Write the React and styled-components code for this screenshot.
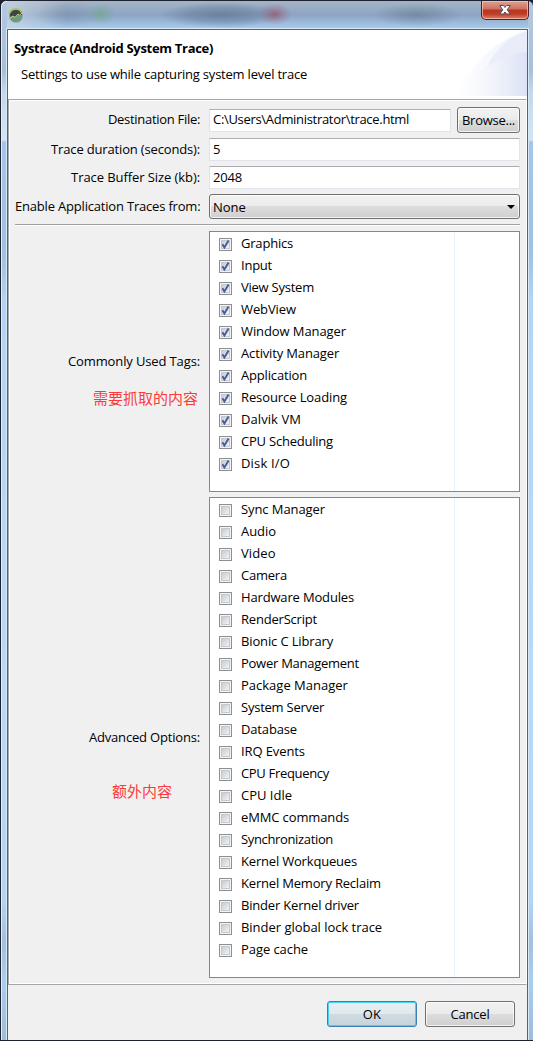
import React from "react";
import styled, { createGlobalStyle, css } from "styled-components";

const Global = createGlobalStyle`
  * { box-sizing: border-box; }
  html, body { margin: 0; background: #1b2230; }
  body { font: 13px/18px "Open Sans", "Noto Sans CJK SC", sans-serif; color: #000; width: 533px; height: 1041px; overflow: hidden; }
`;

const Window = styled.div`
  width: 533px;
  height: 1041px;
  display: flex;
  flex-direction: column;
  border: 1px solid #1c2230;
  border-width: 1px 0 1px 1px;
  border-radius: 6px 6px 0 0;
  box-shadow: inset 1px 1px 0 #e4edf5;
  padding: 0 5px 0 6px;
  background:
    linear-gradient(#b4c9e0 0, #a9bfd8 70px, #c3d8ee 90px, #d3e4f5 139px, #a5c6ea 141px, #a0bfe2 250px, #b3d4f6 300px, #bad9fa 700px, #b4d4f5 900px, #a3bfdc 940px, #aacdf0 980px, #9fbad6 1041px);
`;

const TitleBar = styled.header`
  flex: none;
  height: 28px;
  display: flex;
  justify-content: space-between;
  padding-left: 2px;
  background:
    radial-gradient(ellipse 14px 11px at 94px 13px, rgba(110,165,140,.7), rgba(110,165,140,.3) 50%, transparent),
    radial-gradient(ellipse 17px 11px at 268px 13px, rgba(150,80,105,.7), rgba(150,80,105,.3) 50%, transparent),
    radial-gradient(ellipse 62px 13px at 215px 14px, rgba(70,95,125,.5), rgba(70,95,125,.3) 55%, transparent),
    radial-gradient(ellipse 45px 12px at 410px 14px, rgba(85,105,128,.45), rgba(85,105,128,.2) 55%, transparent),
    radial-gradient(ellipse 34px 13px at 62px 14px, rgba(104,130,160,.4), transparent),
    linear-gradient(90deg, rgba(215,225,235,.6), transparent 60px),
    linear-gradient(#a5b4c6, #8da5c2 14px, #a7c9ec 27px);
`;

const CloseButton = styled.button`
  width: 48px;
  height: 19px;
  margin-right: -1px;
  padding: 0 0 1px;
  border: 1px solid #55202a;
  border-top: 0;
  border-radius: 0 0 5px 5px;
  box-shadow: inset 0 0 0 1px rgba(255,205,190,.65);
  background: linear-gradient(#dfa091, #ce7260 8px, #b83722 9px, #bd3d26 13px, #df8169);
  display: grid;
  place-items: center;
`;

const Body = styled.main`
  flex: 1;
  min-height: 0;
  display: flex;
  flex-direction: column;
  border: 1px solid #4f6474;
  border-bottom: 0;
  outline: 1px solid #d6eaf6;
  clip-path: inset(-1px -1px 0 -1px);
  background: #f0f0f0;
`;

const Banner = styled.section`
  flex: none;
  height: 69px;
  display: flex;
  justify-content: space-between;
  background: #fff;
  padding-left: 6px;
`;

const Heading = styled.h1`
  margin: 9px 0 8px;
  font-size: 13px;
  line-height: 18px;
  font-weight: 700;
  white-space: nowrap;
  letter-spacing: -0.3px;
`;

const Subheading = styled.p`
  margin: 0 0 0 7px;
`;

const Panel = styled.section`
  flex: none;
  height: 886px;
  border: 1px solid #a5a5ad;
  border-right-color: #fff;
  box-shadow: inset 1px 1px 0 #fff, inset 0 -1px 0 #fff;
  padding: 7px 6px 0;
  display: flex;
  flex-direction: column;
`;

const Field = styled.div`
  display: grid;
  grid-template-columns: 185px 1fr auto;
  column-gap: ${p => (p.$button ? "6px" : "0")};
  align-items: center;
  height: ${p => p.$h}px;
  margin-bottom: ${p => p.$mb}px;
`;

const Label = styled.label`
  position: relative;
  padding-bottom: 2px;
  text-align: right;
  white-space: nowrap;
  letter-spacing: ${p => p.$ls || 0}px;
`;

const Text = styled.span`
  letter-spacing: ${p => p.$ls || 0}px;
  white-space: nowrap;
`;

const Input = styled.div`
  height: 23px;
  margin-left: ${p => (p.$first ? 3 : 9)}px;
  border: 1px solid #e2e3ea;
  border-top-color: #abadb3;
  border-radius: 1px;
  background: #fff;
  padding: ${p => (p.$first ? 0 : 1)}px 3px;
  line-height: 19px;
`;

const raised = css`
  border: 1px solid #707070;
  border-radius: 3px;
  box-shadow: inset 0 0 0 1px rgba(255,255,255,.75);
  background: linear-gradient(#f2f2f2, #ebebeb 49%, #dddddd 50%, #cfcfcf);
`;

const Button = styled.button`
  ${raised}
  height: 26px;
  width: ${p => p.$w}px;
  padding: 0 0 1px;
  font: inherit;
  color: #000;
  text-align: center;
  white-space: nowrap;
  ${p => p.$primary && css`
    border-color: #3c7fb1;
    box-shadow: inset 0 0 0 1px #48d0f6;
    background: linear-gradient(#eaf0f3, #dfe8ec 49%, #cfdce3 50%, #c5d3dc);
  `}
`;

const Select = styled.div`
  ${raised}
  height: 25px;
  margin-left: 9px;
  display: flex;
  align-items: center;
  justify-content: space-between;
  padding: 0 4px 0 3px;
`;

const Divider = styled.hr`
  width: 100%;
  height: 2px;
  margin: 0 0 5px;
  border: 0;
  border-top: 1px solid #a0a0a0;
  border-bottom: 1px solid #fff;
`;

const Group = styled.div`
  display: grid;
  grid-template-columns: 185px 1fr;
  column-gap: 9px;
  align-items: center;
  height: ${p => p.$h}px;
  margin-bottom: 5px;
`;

const Annotation = styled.span`
  position: absolute;
  right: ${p => p.$right}px;
  top: ${p => p.$top}px;
  font: 15px/20px "Noto Sans CJK SC", sans-serif;
  letter-spacing: 0;
  color: #fb3b3b;
`;

const List = styled.ul`
  height: 100%;
  margin: 0;
  padding: 1px 0 0 9px;
  list-style: none;
  border: 1px solid #828790;
  background: linear-gradient(#e5f1fb, #e5f1fb) 244px 0 / 1px 100% no-repeat #fff;
`;

const Row = styled.li`
  height: 22px;
  display: flex;
  align-items: center;
  gap: 9px;
`;

const RowText = styled(Text)`
  padding-bottom: 2px;
`;

const Footer = styled.footer`
  flex: 1;
  display: flex;
  justify-content: flex-end;
  gap: 8px;
  padding: 16px 12px 0 0;
`;

const CheckBox = ({ checked }) => (
  <svg width="13" height="13" viewBox="0 0 13 13">
    <defs>
      <linearGradient id="well" x1="0" y1="0" x2="1" y2="1">
        <stop offset="0" stopColor="#c3c8d2" />
        <stop offset="1" stopColor="#f6f6f6" />
      </linearGradient>
    </defs>
    <rect x=".5" y=".5" width="12" height="12" fill="#f4f4f4" stroke="#8e8f8f" />
    <rect x="2.5" y="2.5" width="8" height="8" fill="url(#well)" stroke="#c4c9cf" />
    {checked && <path d="M3.4 6.2 5.4 9.5 9.6 2.6" fill="none" stroke="#465a9c" strokeWidth="1.9" />}
  </svg>
);

const AppIcon = styled.svg`
  margin-top: 6px;
`;

/* Each tag: its name and the tracking of its text. */
const common = [
  ["Graphics", -0.2], ["Input", -0.23], ["View System", -0.24], ["WebView", -0.1],
  ["Window Manager", -0.09], ["Activity Manager", -0.15], ["Application", -0.17],
  ["Resource Loading", -0.1], ["Dalvik VM", 0.07], ["CPU Scheduling", -0.22], ["Disk I/O", 0.17],
];
const advanced = [
  ["Sync Manager", -0.08], ["Audio", -0.05], ["Video", 0.1], ["Camera", -0.22],
  ["Hardware Modules", -0.16], ["RenderScript", -0.2], ["Bionic C Library", -0.14],
  ["Power Management", -0.26], ["Package Manager", 0], ["System Server", -0.23],
  ["Database", -0.15], ["IRQ Events", -0.1], ["CPU Frequency", -0.32], ["CPU Idle", 0],
  ["eMMC commands", -0.13], ["Synchronization", -0.35], ["Kernel Workqueues", -0.19],
  ["Kernel Memory Reclaim", -0.19], ["Binder Kernel driver", -0.19],
  ["Binder global lock trace", -0.03], ["Page cache", -0.07],
];

const TagList = ({ items, checked }) => (
  <List>
    {items.map(([name, ls]) => (
      <Row key={name}>
        <CheckBox checked={checked} />
        <RowText $ls={ls}>{name}</RowText>
      </Row>
    ))}
  </List>
);

export default function App() {
  return (
    <>
      <Global />
      <Window>
        <TitleBar>
          <AppIcon width="14" height="16" viewBox="0 0 14 16">
            <circle cx="7" cy="9" r="6.6" fill="#6f9a82" />
            <path d="M.6 10A6.5 6.5 0 0 1 13.4 8L9 8 6 10 4 9Z" fill="#3f4347" />
            <path d="M1 11 4 9l2 1.500L9 7l1.500 1L13 6" fill="none" stroke="#c9d66b" />
            <path d="M.8 11A6.400 6.400 0 0 1 12.500 5.500" fill="none" stroke="#9dc62c" strokeWidth="1.2" />
          </AppIcon>
          <CloseButton aria-label="Close">
            <svg width="12" height="10" viewBox="0 0 12 10">
              <path d="M.8.5h3.700L6 2.500 7.500.5h3.700L8.200 4.800l3 4.200H7.500L6 7 4.500 9H.8l3-4.200Z" fill="#fff" stroke="#4c4f63" />
            </svg>
          </CloseButton>
        </TitleBar>
        <Body>
          <Banner>
            <div>
              <Heading>Systrace (Android System Trace)</Heading>
              <Subheading><Text $ls={-0.21}>Settings to use while capturing system level trace</Text></Subheading>
            </div>
            <svg width="74" height="66" viewBox="0 0 74 66">
              <defs>
                <linearGradient id="arc1"><stop offset="0" stopColor="#fff" /><stop offset="1" stopColor="#eef1fa" /></linearGradient>
                <linearGradient id="arc2"><stop offset="0" stopColor="#fff" stopOpacity="0" /><stop offset="1" stopColor="#dbe2f5" /></linearGradient>
              </defs>
              <path d="M2 66C18 34 45 8 74 1V66Z" fill="url(#arc1)" />
              <path d="M34 37C44 18 58 5 74 1V22C58 24 46 29 34 37Z" fill="#e6eaf8" opacity=".7" />
              <path d="M2 66C20 42 44 24 74 22V66Z" fill="url(#arc2)" />
            </svg>
          </Banner>
          <Panel>
            <Field $h={26} $mb={4} $button>
              <Label $ls={-0.3}>Destination File:</Label>
              <Input $first><Text $ls={-0.31}>C:\Users\Administrator\trace.html</Text></Input>
              <Button $w={63}><Text $ls={-0.26}>Browse...</Text></Button>
            </Field>
            <Field $h={25} $mb={3}>
              <Label $ls={-0.16}>Trace duration (seconds):</Label>
              <Input><Text>5</Text></Input>
            </Field>
            <Field $h={25} $mb={4}>
              <Label $ls={-0.08}>Trace Buffer Size (kb):</Label>
              <Input><Text $ls={-0.18}>2048</Text></Input>
            </Field>
            <Field $h={25} $mb={5}>
              <Label $ls={-0.19}>Enable Application Traces from:</Label>
              <Select>
                <Text>None</Text>
                <svg width="8" height="4" viewBox="0 0 8 4"><path d="M0 0h8L4 4Z" /></svg>
              </Select>
            </Field>
            <Divider />
            <Group $h={261}>
              <Label $ls={-0.13}>Commonly Used Tags:<Annotation $right={2} $top={36}>需要抓取的内容</Annotation></Label>
              <TagList items={common} checked />
            </Group>
            <Group $h={481}>
              <Label $ls={-0.18}>Advanced Options:<Annotation $right={28} $top={53}>额外内容</Annotation></Label>
              <TagList items={advanced} />
            </Group>
          </Panel>
          <Footer>
            <Button $w={90} $primary><Text $ls={0.3}>OK</Text></Button>
            <Button $w={90}><Text $ls={-0.2}>Cancel</Text></Button>
          </Footer>
        </Body>
      </Window>
    </>
  );
}
